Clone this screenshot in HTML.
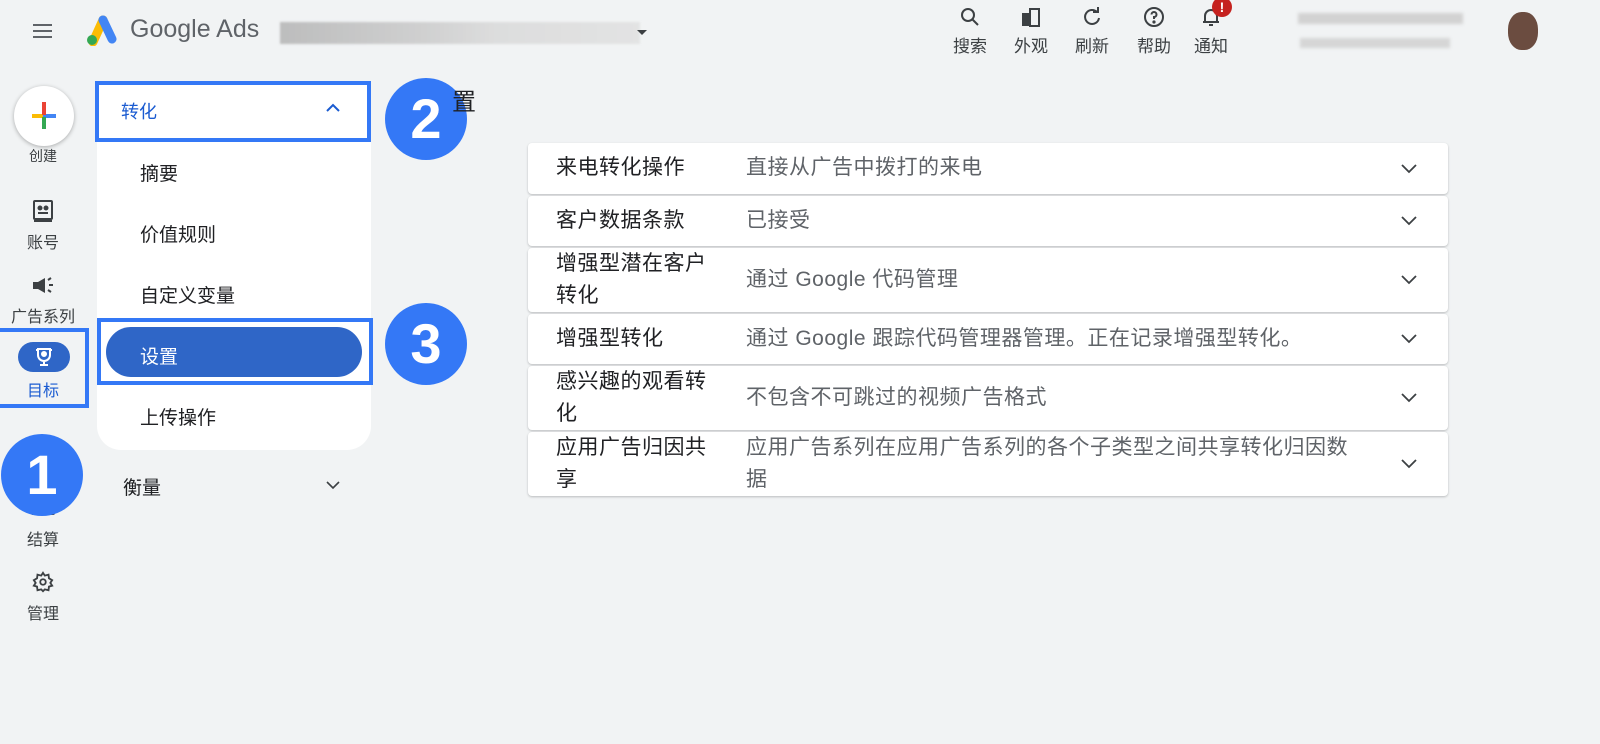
<!DOCTYPE html>
<html><head><meta charset="utf-8"><style>
*{box-sizing:border-box;margin:0;padding:0}
body{width:1600px;height:744px;background:#f1f3f4;font-family:"Liberation Sans","Noto Sans CJK SC",sans-serif;position:relative;overflow:hidden;color:#202124}
.abs{position:absolute}
.nav{position:absolute;left:0;width:86px;text-align:center;font-size:16px;color:#3c4043}
.card{position:absolute;left:528px;width:920px;background:#fff;border-radius:4px;box-shadow:0 1px 2px rgba(60,64,67,.3)}
.card .t{position:absolute;left:28px;font-size:21px;letter-spacing:.5px;line-height:32px;color:#202124;width:160px}
.card .d{position:absolute;left:218px;font-size:21px;letter-spacing:.5px;line-height:32px;color:#5f6368;width:612px}
.card .c{position:absolute;right:30px;top:50%;margin-top:-8px}
.num{position:absolute;width:82px;height:82px;border-radius:50%;background:#3478f6;color:#fff;font-size:56px;font-weight:bold;text-align:center;line-height:82px;font-family:"Liberation Sans",sans-serif}
.item{position:absolute;left:140px;font-size:19px;color:#202124}
.tl{position:absolute;top:32px;font-size:17px;color:#3c4043}
</style></head><body>
<div class="abs" style="left:33px;top:24px;width:19px;height:2px;background:#5f6368;box-shadow:0 6px 0 #5f6368,0 12px 0 #5f6368"></div>
<svg class="abs" style="left:83px;top:14px" width="34" height="32" viewBox="0 0 34 32"><path d="M10 28 L20 6" stroke="#fbbc04" stroke-width="9" stroke-linecap="round"/><path d="M20 6 L29 25" stroke="#4285f4" stroke-width="9" stroke-linecap="round"/><circle cx="9" cy="26" r="5" fill="#34a853"/></svg>
<div class="abs" style="left:130px;top:15px;font-size:25px;color:#5f6368">Google Ads</div>
<div class="abs" style="left:280px;top:22px;width:360px;height:22px;background:linear-gradient(90deg,#b0b0b0,#c8c8c8 40%,#d8d8d8 60%,#e0e0e0);opacity:.8;filter:blur(1px)"></div>
<div class="abs" style="left:637px;top:30px;border:5px solid transparent;border-top:5px solid #3c4043"></div>
<svg class="abs" style="left:958px;top:5px" width="24" height="24" viewBox="0 0 24 24" fill="none" stroke="#3c4043" stroke-width="2"><circle cx="10" cy="10" r="6"/><path d="M14.5 14.5 L20 20"/></svg>
<svg class="abs" style="left:1019px;top:5px" width="24" height="24" viewBox="0 0 24 24"><rect x="3" y="8" width="8" height="13" fill="#3c4043"/><rect x="11" y="4" width="9" height="17" fill="none" stroke="#3c4043" stroke-width="2"/></svg>
<svg class="abs" style="left:1080px;top:5px" width="24" height="24" viewBox="0 0 24 24" fill="none" stroke="#3c4043" stroke-width="2"><path d="M17 7 A7 7 0 1 0 19 13"/><path d="M13 7 L18 7 L18 2" /></svg>
<svg class="abs" style="left:1142px;top:5px" width="24" height="24" viewBox="0 0 24 24" fill="none" stroke="#3c4043" stroke-width="2"><circle cx="12" cy="12" r="9"/><path d="M9.5 9.5 A2.5 2.5 0 1 1 12 12 V14"/><circle cx="12" cy="17" r=".6" fill="#3c4043"/></svg>
<svg class="abs" style="left:1199px;top:5px" width="24" height="24" viewBox="0 0 24 24" fill="none" stroke="#3c4043" stroke-width="2"><path d="M6 17 V11 A6 6 0 0 1 18 11 V17 Z M4 17 H20 M10 20 H14"/></svg>
<div class="abs" style="left:1212px;top:-3px;width:20px;height:20px;border-radius:50%;background:#c5221f;color:#fff;font-size:14px;font-weight:bold;text-align:center;line-height:20px">!</div>
<div class="tl" style="left:953px">搜索</div>
<div class="tl" style="left:1014px">外观</div>
<div class="tl" style="left:1075px">刷新</div>
<div class="tl" style="left:1137px">帮助</div>
<div class="tl" style="left:1194px">通知</div>
<div class="abs" style="left:1298px;top:13px;width:165px;height:11px;background:#d2d2d2;filter:blur(1.5px)"></div>
<div class="abs" style="left:1300px;top:38px;width:150px;height:10px;background:#d6d6d6;filter:blur(1.5px)"></div>
<div class="abs" style="left:1508px;top:12px;width:30px;height:38px;border-radius:45%;background:#6b4c40"></div>
<div class="abs" style="left:14px;top:86px;width:60px;height:60px;border-radius:50%;background:#fff;box-shadow:0 1px 4px rgba(0,0,0,.3)"></div>
<div class="abs" style="left:32px;top:114px;width:11px;height:4px;background:#fbbc04"></div>
<div class="abs" style="left:43px;top:114px;width:13px;height:4px;background:#4285f4"></div>
<div class="abs" style="left:42px;top:102px;width:4px;height:13px;background:#ea4335"></div>
<div class="abs" style="left:42px;top:117px;width:4px;height:12px;background:#34a853"></div>
<div class="nav" style="top:146px;font-size:14px">创建</div>
<svg class="abs" style="left:32px;top:199px" width="22" height="24" viewBox="0 0 22 24" fill="none" stroke="#3c4043" stroke-width="2"><rect x="2" y="2" width="18" height="18" rx="1"/><path d="M2 22 H20"/><circle cx="8" cy="9" r="1.5" fill="#3c4043"/><circle cx="14" cy="9" r="1.5" fill="#3c4043"/><path d="M6 14 H16"/></svg>
<div class="nav" style="top:229px">账号</div>
<svg class="abs" style="left:30px;top:275px" width="26" height="22" viewBox="0 0 26 22" fill="#3c4043"><path d="M3 7 H8 L15 3 V18 L8 14 H3 Z"/><path d="M18 5 L21 3 M19 10 H23 M18 15 L21 17" stroke="#3c4043" stroke-width="2"/></svg>
<div class="nav" style="top:303px">广告系列</div>
<div class="abs" style="left:0;top:328px;width:89px;height:80px;border:4px solid #3478f6;border-left:none"></div>
<div class="abs" style="left:18px;top:342px;width:52px;height:30px;border-radius:15px;background:#2f66c7"></div>
<svg class="abs" style="left:33px;top:346px" width="22" height="22" viewBox="0 0 22 22" fill="none" stroke="#fff" stroke-width="2"><path d="M5 3 H17 V9 A6 6 0 0 1 5 9 Z M3 4 H5 M17 4 H19 M11 15 V18 M7 19 H15"/><circle cx="11" cy="8" r="2" fill="#fff"/></svg>
<div class="nav" style="top:377px;color:#1a5bd1">目标</div>
<div class="abs" style="left:31px;top:497px;width:24px;height:18px;border:2px solid #3c4043;border-radius:2px"></div>
<div class="nav" style="top:526px">结算</div>
<svg class="abs" style="left:32px;top:571px" width="22" height="22" viewBox="0 0 24 24" fill="none" stroke="#3c4043" stroke-width="2"><circle cx="12" cy="12" r="3"/><path d="M12 2 L14 5 L18 4 L18.5 8 L22 10 L20 13 L22 16 L18.5 17 L18 21 L14 20 L12 22 L10 20 L6 21 L5.5 17 L2 16 L4 13 L2 10 L5.5 8 L6 4 L10 5 Z"/></svg>
<div class="nav" style="top:600px">管理</div>
<div class="num" style="left:1px;top:434px">1</div>
<div class="abs" style="left:97px;top:84px;width:274px;height:366px;background:#fff;border-radius:0 0 24px 24px"></div>
<div class="abs" style="left:95px;top:81px;width:276px;height:61px;border:4px solid #3478f6"></div>
<div class="abs" style="left:121px;top:98px;font-size:18px;color:#1a5bd1">转化</div>
<svg class="abs" style="left:325px;top:103px" width="16" height="10" viewBox="0 0 16 10" fill="none" stroke="#1a5bd1" stroke-width="2"><path d="M2 8 L8 2 L14 8"/></svg>
<div class="item" style="top:159px">摘要</div>
<div class="item" style="top:220px">价值规则</div>
<div class="item" style="top:281px">自定义变量</div>
<div class="abs" style="left:97px;top:318px;width:276px;height:67px;border:4px solid #3478f6;background:#fff"></div>
<div class="abs" style="left:106px;top:327px;width:256px;height:50px;border-radius:25px;background:#2f66c7"></div>
<div class="item" style="top:342px;color:#fff">设置</div>
<div class="item" style="top:403px">上传操作</div>
<div class="abs" style="left:123px;top:473px;font-size:19px">衡量</div>
<svg class="abs" style="left:325px;top:480px" width="16" height="10" viewBox="0 0 16 10" fill="none" stroke="#3c4043" stroke-width="1.6"><path d="M2 2 L8 8 L14 2"/></svg>
<div class="num" style="left:385px;top:78px">2</div>
<div class="abs" style="left:452px;top:82px;font-size:24px">置</div>
<div class="num" style="left:385px;top:303px">3</div>
<div class="card" style="top:143px;height:51px"><div class="t" style="top:9px">来电转化操作</div><div class="d" style="top:9px">直接从广告中拨打的来电</div><svg class="c" width="18" height="16" viewBox="0 0 18 16" fill="none" stroke="#3c4043" stroke-width="1.8"><path d="M2 4 L9 11 L16 4"/></svg></div>
<div class="card" style="top:196px;height:50px"><div class="t" style="top:9px">客户数据条款</div><div class="d" style="top:9px">已接受</div><svg class="c" width="18" height="16" viewBox="0 0 18 16" fill="none" stroke="#3c4043" stroke-width="1.8"><path d="M2 4 L9 11 L16 4"/></svg></div>
<div class="card" style="top:248px;height:64px"><div class="t" style="top:0px">增强型潜在客户转化</div><div class="d" style="top:16px">通过 Google 代码管理</div><svg class="c" width="18" height="16" viewBox="0 0 18 16" fill="none" stroke="#3c4043" stroke-width="1.8"><path d="M2 4 L9 11 L16 4"/></svg></div>
<div class="card" style="top:314px;height:50px"><div class="t" style="top:9px">增强型转化</div><div class="d" style="top:9px;width:700px">通过 Google 跟踪代码管理器管理。正在记录增强型转化。</div><svg class="c" width="18" height="16" viewBox="0 0 18 16" fill="none" stroke="#3c4043" stroke-width="1.8"><path d="M2 4 L9 11 L16 4"/></svg></div>
<div class="card" style="top:366px;height:64px"><div class="t" style="top:0px">感兴趣的观看转化</div><div class="d" style="top:16px">不包含不可跳过的视频广告格式</div><svg class="c" width="18" height="16" viewBox="0 0 18 16" fill="none" stroke="#3c4043" stroke-width="1.8"><path d="M2 4 L9 11 L16 4"/></svg></div>
<div class="card" style="top:432px;height:64px"><div class="t" style="top:0px">应用广告归因共享</div><div class="d" style="top:0px">应用广告系列在应用广告系列的各个子类型之间共享转化归因数据</div><svg class="c" width="18" height="16" viewBox="0 0 18 16" fill="none" stroke="#3c4043" stroke-width="1.8"><path d="M2 4 L9 11 L16 4"/></svg></div>
</body></html>
